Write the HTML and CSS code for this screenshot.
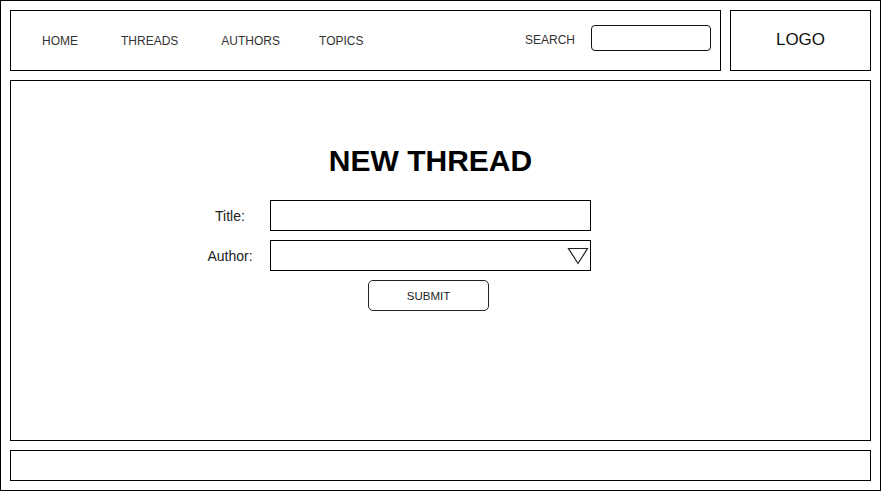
FILE: index.html
```html
<!DOCTYPE html>
<html>
<head>
<meta charset="utf-8">
<link rel="stylesheet" href="styles.css">
</head>
<body>
<div class="frame">
  <div class="top">
    <nav class="nav">
      <div class="links">
        <span class="link">HOME</span>
        <span class="link">THREADS</span>
        <span class="link">AUTHORS</span>
        <span class="link link-last">TOPICS</span>
      </div>
      <div class="search">
        <span class="search-label">SEARCH</span>
        <input class="search-input" type="text">
      </div>
    </nav>
    <div class="logo">LOGO</div>
  </div>
  <main class="main">
    <div class="form">
      <h1 class="title">NEW THREAD</h1>
      <label class="label">Title:</label>
      <input class="field" type="text">
      <label class="label">Author:</label>
      <div class="field select">
        <svg class="arrow" width="22" height="18" viewBox="0 0 22 18"><polygon points="1.5,1.5 20.5,1.5 11,16.5" fill="none" stroke="#222" stroke-width="1.2"/></svg>
      </div>
      <button class="submit">SUBMIT</button>
    </div>
  </main>
  <footer class="footer"></footer>
</div>
</body>
</html>
```

FILE: styles.css
```css
* { box-sizing: border-box; }
html, body { margin: 0; padding: 0; background: #fff; }
body { font-family: "Liberation Sans", Arial, sans-serif; color: #222; }

.frame {
  width: 881px;
  height: 491px;
  border: 1px solid #000;
  padding: 9px;
  display: flex;
  flex-direction: column;
  gap: 9px;
}

.top { display: flex; gap: 9px; height: 61px; }

.nav {
  width: 711px;
  border: 1px solid #000;
  display: flex;
  align-items: center;
  justify-content: space-between;
  padding: 0 9px 0 31px;
}
.links { display: flex; gap: 43px; font-size: 12px; color: #333; padding-top: 1px; }
.link-last { margin-left: -4px; }
.search { display: flex; align-items: center; gap: 16px; margin-bottom: 5px; }
.search-label { font-size: 12px; color: #333; margin-top: 3px; }
.search-input {
  width: 120px;
  height: 26px;
  border: 1px solid #111;
  border-radius: 4px;
  padding: 0;
  margin: 0;
  outline: none;
}

.logo {
  width: 141px;
  border: 1px solid #000;
  display: flex;
  align-items: center;
  justify-content: center;
  font-size: 17px;
  color: #111;
  padding-bottom: 2px;
}

.main {
  height: 361px;
  border: 1px solid #000;
  padding: 65px 0 0 179px;
}
.form {
  display: grid;
  grid-template-columns: 80px 321px;
  row-gap: 9px;
  align-items: center;
}
.title {
  grid-column: 2;
  margin: 0 0 15px 0;
  font-size: 30px;
  line-height: 30px;
  font-weight: bold;
  color: #000;
  text-align: center;
}
.label { font-size: 14px; text-align: center; color: #222; }
.field {
  height: 31px;
  border: 1px solid #000;
  margin: 0;
  padding: 0;
  outline: none;
  background: #fff;
}
.select { display: flex; align-items: center; justify-content: flex-end; padding-right: 1px; }
.arrow { display: block; margin-top: 1px; }
.submit {
  grid-column: 2;
  justify-self: start;
  margin-left: 98px;
  width: 121px;
  height: 31px;
  border: 1px solid #222;
  border-radius: 5px;
  background: #fff;
  font-family: "Liberation Sans", Arial, sans-serif;
  font-size: 11.5px;
  color: #222;
  padding: 0;
}

.footer { height: 31px; border: 1px solid #000; }
```
